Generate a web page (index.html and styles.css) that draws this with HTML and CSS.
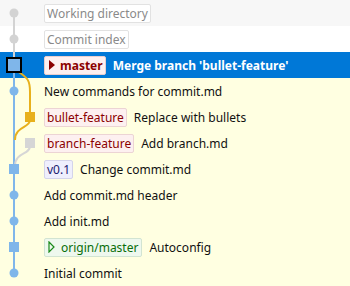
FILE: index.html
```html
<!DOCTYPE html>
<html lang="en">
<head>
  <meta charset="UTF-8">
  <meta name="viewport" content="width=device-width, initial-scale=1.0">
  <title>Commit Log</title>
  <link rel="stylesheet" href="styles.css">
</head>
<body>
  <div class="log">
    <svg class="graph" width="44" height="286" viewBox="0 0 44 286">
      <!-- lines -->
      <line x1="14" y1="13" x2="14" y2="58" stroke="#d3d3d3" stroke-width="2"/>
      <line x1="14" y1="72" x2="14" y2="273" stroke="#7fb6ea" stroke-width="2"/>
      <path d="M17 71 C 29 78, 30 82, 30 92 L30 117" fill="none" stroke="#e8b01c" stroke-width="2"/>
      <path d="M30 120 C 30 128, 15 126, 15 140" fill="none" stroke="#e8b01c" stroke-width="2"/>
      <path d="M30 146 C 30 155, 15 152, 15 166" fill="none" stroke="#d6d6d6" stroke-width="2"/>
      <!-- nodes -->
      <circle cx="14" cy="13" r="4.5" fill="#d3d3d3"/>
      <circle cx="14" cy="39" r="4.5" fill="#d3d3d3"/>
      <rect x="7" y="58" width="14" height="14" fill="#7fb6ea" stroke="#000" stroke-width="2"/>
      <circle cx="14" cy="91" r="4.5" fill="#7fb6ea"/>
      <rect x="25" y="112" width="10" height="10" fill="#e8b01c"/>
      <rect x="25" y="138" width="10" height="10" fill="#d6d6d6"/>
      <rect x="9" y="164" width="10" height="10" fill="#7fb6ea"/>
      <circle cx="14" cy="195" r="4.5" fill="#7fb6ea"/>
      <circle cx="14" cy="221" r="4.5" fill="#7fb6ea"/>
      <rect x="9" y="242" width="10" height="10" fill="#7fb6ea"/>
      <circle cx="14" cy="273" r="4.5" fill="#7fb6ea"/>
    </svg>

    <div class="row row-wd"><span class="ref ref-virtual">Working directory</span></div>
    <div class="row row-index"><span class="ref ref-virtual">Commit index</span></div>
    <div class="row row-selected">
      <span class="ref ref-head">
        <svg class="arrow" width="6" height="10" viewBox="0 0 6 10"><path d="M0 0 L6 5 L0 10 Z" fill="#8b0000"/></svg>master
      </span>
      <span class="msg">Merge branch 'bullet-feature'</span>
    </div>
    <div class="row"><span class="msg">New commands for commit.md</span></div>
    <div class="row"><span class="ref ref-branch">bullet-feature</span><span class="msg">Replace with bullets</span></div>
    <div class="row"><span class="ref ref-branch">branch-feature</span><span class="msg">Add branch.md</span></div>
    <div class="row"><span class="ref ref-tag">v0.1</span><span class="msg">Change commit.md</span></div>
    <div class="row"><span class="msg">Add commit.md header</span></div>
    <div class="row"><span class="msg">Add init.md</span></div>
    <div class="row">
      <span class="ref ref-remote">
        <svg class="arrow" width="7" height="12" viewBox="0 0 7 12"><path d="M1 1 L6 6 L1 11 Z" fill="none" stroke="#1a8a1a" stroke-width="1.2"/></svg>origin/master
      </span>
      <span class="msg">Autoconfig</span>
    </div>
    <div class="row"><span class="msg">Initial commit</span></div>
  </div>
</body>
</html>
```

FILE: styles.css
```css
body {
  margin: 0;
  font-family: "Noto Sans", "Open Sans", sans-serif;
  font-size: 12px;
  color: #111;
  background: #ffffe1;
}
.log {
  position: relative;
  width: 350px;
  height: 286px;
  overflow: hidden;
}
.graph {
  position: absolute;
  left: 0;
  top: 0;
}
.row {
  height: 26px;
  display: flex;
  align-items: center;
  gap: 7px;
  padding-left: 44px;
  background: #ffffe1;
  white-space: nowrap;
}
.row-wd {
  background: #f7f7f7;
}
.row-index {
  background: #fff;
}
.row-selected {
  background: #0078d7;
  color: #fff;
  font-weight: bold;
}
.ref {
  display: inline-flex;
  align-items: center;
  height: 17px;
  padding: 0 2px;
  border: 1px solid #ddd;
  border-radius: 2px;
  line-height: 17px;
}
.ref-virtual {
  background: #fff;
  color: #8a8a8a;
  border-color: #e2e2e2;
}
.ref-head {
  padding: 0 2px 0 4px;
  background: #fdf0f0;
  border-color: #e9cdcd;
  color: #8b0000;
  font-weight: bold;
}
.ref-head .arrow {
  margin-right: 5px;
}
.ref-branch {
  background: #fdf0f0;
  border-color: #ecd4d4;
  color: #8b0000;
}
.ref-tag {
  background: #efeffd;
  border-color: #d4d4ea;
  color: #20206e;
}
.ref-remote {
  padding: 0 3px;
  background: #eef8ee;
  border-color: #d2e4d2;
  color: #0a6e0a;
}
.arrow {
  margin-right: 6px;
}
```
